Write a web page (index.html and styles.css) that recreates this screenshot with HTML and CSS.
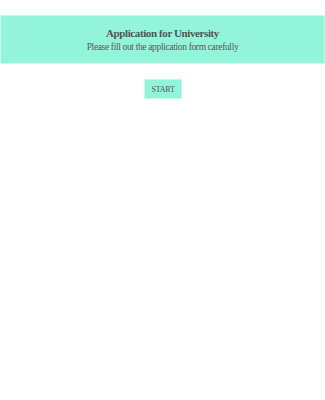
FILE: index.html
```html
<!DOCTYPE html>
<html lang="en">
<head>
    <meta charset="UTF-8">
    <meta name="viewport" content="width=device-width, initial-scale=1.0">
    <title>Application for University</title>
    <link rel="stylesheet" href="styles.css">
</head>
<body>
    <div class="header">
        <h1>Application for University</h1>
        <p>Please fill out the application form carefully</p>
    </div>
    <div class="actions">
        <button type="button" class="start-btn">START</button>
    </div>
</body>
</html>
```

FILE: styles.css
```css
body {
    font-family: "Liberation Serif", serif;
    margin: 0;
    padding-top: 15px;
    color: #555;
    background-color: #fff;
}
.header {
    background-color: #92f4d9;
    border: 1px solid #c8f9ea;
    text-align: center;
    height: 47px;
}
h1 {
    margin: 10px 0 0;
    font-size: 11px;
    font-weight: bold;
    line-height: 14px;
    letter-spacing: -0.4px;
    color: #555;
}
p {
    margin: 2px 0 0;
    font-size: 9.5px;
    line-height: 11px;
    letter-spacing: -0.35px;
    color: #5a5a5a;
}
.actions {
    display: flex;
    justify-content: center;
    margin-top: 15px;
}
.start-btn {
    background-color: #92f4d9;
    border: 1px solid #c8f9ea;
    color: #555;
    font-family: "Liberation Serif", serif;
    font-size: 8px;
    letter-spacing: -0.2px;
    width: 38px;
    height: 20px;
    padding: 0;
    margin-left: 1px;
}
```
